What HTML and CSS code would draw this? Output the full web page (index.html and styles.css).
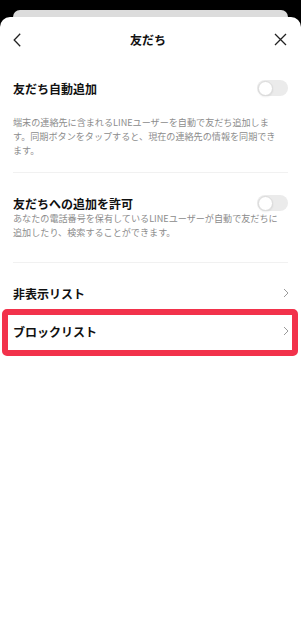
FILE: index.html
```html
<!DOCTYPE html>
<html lang="ja">

<head>
    <meta charset="UTF-8" />
    <meta name="viewport" content="width=device-width, initial-scale=1.0" />
    <title>友だち</title>
    <link rel="stylesheet" href="styles.css">
</head>

<body>
    <div class="screen">
        <div class="card-behind"></div>

        <div class="sheet">
            <!-- Header -->
            <header class="nav">
                <button class="nav-btn" aria-label="戻る">
                    <svg width="9" height="14" viewBox="0 0 9 14">
                        <path d="M7.2 0.8 L1.2 7 L7.2 13.2" fill="none" stroke="#222" stroke-width="1.3" />
                    </svg>
                </button>
                <h1 class="nav-title">友だち</h1>
                <button class="nav-btn" aria-label="閉じる">
                    <svg width="13" height="13" viewBox="0 0 13 13">
                        <path d="M1 1 L12 12 M12 1 L1 12" fill="none" stroke="#222" stroke-width="1.3" />
                    </svg>
                </button>
            </header>

            <!-- Settings -->
            <section class="setting setting-first">
                <div class="setting-row">
                    <h2 class="setting-title">友だち自動追加</h2>
                    <span class="toggle"><span class="knob"></span></span>
                </div>
                <p class="setting-desc">端末の連絡先に含まれるLINEユーザーを自動で友だち追加しま<br>す。同期ボタンをタップすると、現在の連絡先の情報を同期でき<br>ます。</p>
            </section>

            <section class="setting setting-second">
                <div class="setting-row">
                    <h2 class="setting-title">友だちへの追加を許可</h2>
                    <span class="toggle"><span class="knob"></span></span>
                </div>
                <p class="setting-desc">あなたの電話番号を保有しているLINEユーザーが自動で友だちに<br>追加したり、検索することができます。</p>
            </section>

            <!-- Lists -->
            <ul class="link-list">
                <li class="link-row">
                    <span>非表示リスト</span>
                    <svg class="chev" width="6" height="10" viewBox="0 0 6 10">
                        <path d="M1 1 L5 5 L1 9" fill="none" stroke="#9a9a9a" stroke-width="1" />
                    </svg>
                </li>
                <li class="link-row">
                    <span>ブロックリスト</span>
                    <svg class="chev" width="6" height="10" viewBox="0 0 6 10">
                        <path d="M1 1 L5 5 L1 9" fill="none" stroke="#9a9a9a" stroke-width="1" />
                    </svg>
                    <span class="mark"></span>
                </li>
            </ul>
        </div>
    </div>
</body>

</html>
```

FILE: styles.css
```css
* {
    box-sizing: border-box;
}

html,
body {
    margin: 0;
    padding: 0;
    background: #000;
    font-family: "Noto Sans CJK JP", "Noto Sans", sans-serif;
    color: #111;
}

.screen {
    display: flex;
    flex-direction: column;
    min-height: 625px;
    padding-top: 10px;
}

.card-behind {
    height: 7px;
    margin: 0 13px;
    background: #dcdcdc;
    border-radius: 7px 7px 0 0;
}

.sheet {
    flex: 1;
    background: #fff;
    border-radius: 10px 10px 0 0;
}

/* header */
.nav {
    height: 45px;
    padding: 0 14px 0 13px;
    display: flex;
    align-items: center;
    justify-content: space-between;
}

.nav-btn {
    background: none;
    border: none;
    padding: 0;
    display: flex;
    align-items: center;
    cursor: pointer;
}

.nav-title {
    margin: 0;
    font-size: 12px;
    font-weight: 700;
}

/* settings */
.setting {
    margin: 0 13px;
    border-bottom: 1px solid #f1f1f1;
}

.setting-first {
    padding: 14px 0 15px;
}

.setting-first .setting-desc {
    margin-top: 15px;
}

.setting-second {
    padding: 22px 0 23px;
}

.setting-row {
    display: flex;
    align-items: center;
    justify-content: space-between;
    height: 24px;
}

.setting-second .setting-row {
    height: 16px;
}

.setting-title {
    margin: 0;
    font-size: 12px;
    font-weight: 700;
}

.setting-desc {
    margin: 0;
    font-size: 9.1px;
    line-height: 14px;
    color: #8c8c8c;
}

.toggle {
    width: 31px;
    height: 16px;
    border-radius: 8px;
    background: #ebebeb;
    display: flex;
    align-items: center;
    padding: 0 1px;
}

.knob {
    width: 15px;
    height: 15px;
    border-radius: 50%;
    background: #fff;
    border: 1px solid #dadada;
    box-shadow: 0 1px 2px rgba(0, 0, 0, 0.08);
}

/* lists */
.link-list {
    list-style: none;
    margin: 11px 0 0;
    padding: 0;
}

.link-row {
    position: relative;
    height: 38px;
    padding: 0 12px 0 13px;
    display: flex;
    align-items: center;
    justify-content: space-between;
    font-size: 12px;
    font-weight: 700;
}

.chev {
    display: block;
}

.mark {
    position: absolute;
    top: -3px;
    bottom: -6px;
    left: 2px;
    right: 3px;
    border: 6px solid #f2324b;
    border-radius: 5px;
    pointer-events: none;
}
```
